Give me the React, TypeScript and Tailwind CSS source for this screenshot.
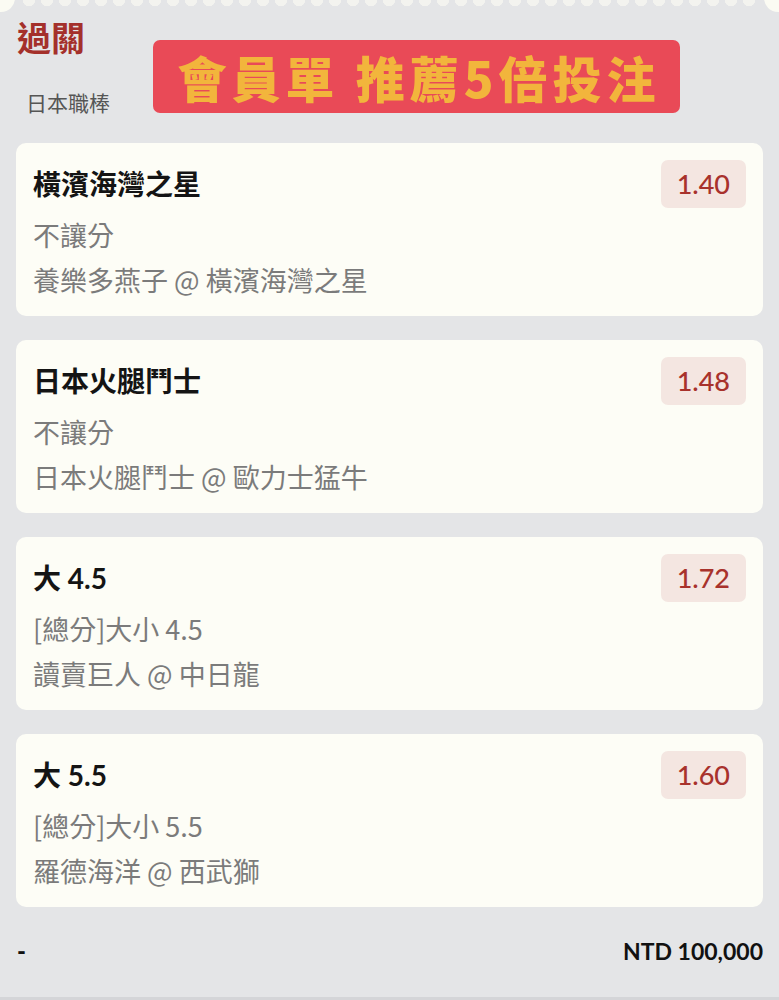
import React from 'react';

interface Bet {
  pick: string;
  market: string;
  match: string;
  odds: string;
}

const bets: Bet[] = [
  { pick: '橫濱海灣之星', market: '不讓分', match: '養樂多燕子 @ 橫濱海灣之星', odds: '1.40' },
  { pick: '日本火腿鬥士', market: '不讓分', match: '日本火腿鬥士 @ 歐力士猛牛', odds: '1.48' },
  { pick: '大 4.5', market: '[總分]大小 4.5', match: '讀賣巨人 @ 中日龍', odds: '1.72' },
  { pick: '大 5.5', market: '[總分]大小 5.5', match: '羅德海洋 @ 西武獅', odds: '1.60' },
];

const BetCard: React.FC<{ bet: Bet }> = ({ bet }) => (
  <div className="rounded-[10px] bg-[#fdfdf6] px-[17px] pt-[17px] pb-[14px]">
    <div className="flex h-[48px] items-center justify-between">
      <span className="text-[28px] font-bold leading-none text-[#141414]">{bet.pick}</span>
      <span className="flex h-[48px] items-center rounded-[7px] bg-[#f4e6e1] px-[16px] text-[27px] font-medium text-[#a8322c]">
        {bet.odds}
      </span>
    </div>
    <div className="mt-[4px] font-['Noto_Sans_CJK_TC',sans-serif] text-[27px] leading-[45px] text-[#7b7b7b]">
      <div>{bet.market}</div>
      <div>{bet.match}</div>
    </div>
  </div>
);

export default function App() {
  return (
    <div className="relative min-h-[1000px] overflow-hidden border-b-[3px] border-[#d4d5d8] bg-[#e4e5e7] font-['Lato','Noto_Sans_CJK_TC',sans-serif]">
      {/* ticket corners */}
      <div className="absolute -left-[15px] -top-[16px] h-[28px] w-[30px] rounded-full bg-[#fbfbf3]" />
      <div className="absolute -right-[15px] -top-[16px] h-[28px] w-[30px] rounded-full bg-[#fbfbf3]" />

      {/* scalloped top edge */}
      <div className="mx-[20px] h-[6px] bg-[radial-gradient(circle_at_50%_0,#f3f3ef_6px,transparent_6.5px)] bg-[length:18px_6px] bg-repeat-x" />

      {/* header */}
      <div className="flex items-start pt-[12px]">
        <div className="flex w-[153px] flex-col pl-[17px]">
          <span className="text-[34px] font-bold leading-[40px] text-[#a4302b]">過關</span>
          <span className="ml-[9px] mt-[31px] text-[21px] leading-[28px] text-[#555555]">日本職棒</span>
        </div>
        <div className="mt-[22px] flex h-[73px] w-[527px] items-center justify-center rounded-[7px] bg-[#e94a57] pl-[5px]">
          <span className="font-['Noto_Sans_CJK_TC',sans-serif] text-[49px] font-black leading-none tracking-[5px] text-[#f2b53c]">
            會員單 推薦5倍投注
          </span>
        </div>
      </div>

      {/* bets */}
      <div className="mx-[16px] mt-[26px] flex flex-col gap-[24px]">
        {bets.map((bet) => (
          <BetCard key={bet.pick} bet={bet} />
        ))}
      </div>

      {/* footer */}
      <div className="mx-[16px] mt-[29px] flex h-[30px] items-center justify-between">
        <span className="pl-[1px] text-[24px] font-black text-[#111]">-</span>
        <span className="text-[23px] font-bold text-[#111]">NTD 100,000</span>
      </div>
    </div>
  );
}
